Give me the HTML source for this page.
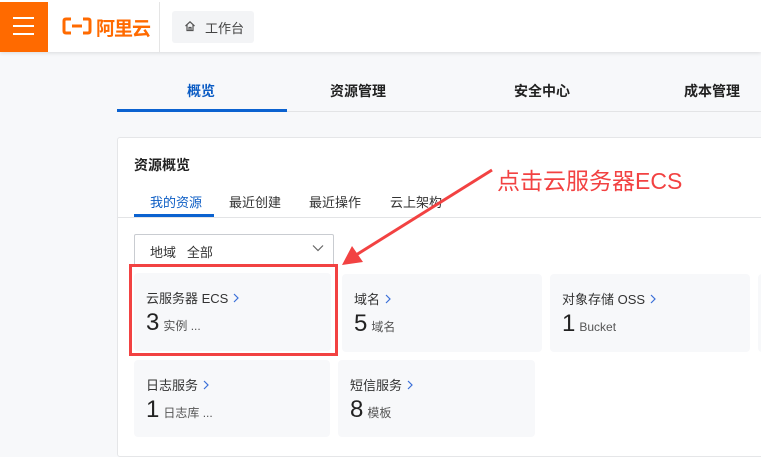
<!DOCTYPE html>
<html><head><meta charset="utf-8"><style>
*{margin:0;padding:0;box-sizing:border-box}
body{width:761px;height:442px;overflow:hidden;background:#f7f8fa;font-family:"Liberation Sans","Noto Sans CJK SC",sans-serif;color:#333;position:relative}
.a{position:absolute}
.hdr{left:0;top:0;width:761px;height:52px;background:#fff;box-shadow:0 1px 4px rgba(0,0,0,.12)}
.tile{position:absolute;background:#f7f8fa;border-radius:4px}
.tile .t{position:absolute;left:12px;top:15px;font-size:13px;color:#333;white-space:nowrap}
.tile .t svg{margin-left:5px;vertical-align:0}
.tile .n{position:absolute;left:12px;top:36px;font-size:24px;color:#222;white-space:nowrap}
.tile .n span{font-size:12px;color:#555;margin-left:4px}
.tab{font-size:14px;font-weight:bold;color:#222;top:81px}
.st{font-size:13px;color:#333;top:192px}
</style></head><body>
<div class="a hdr"></div>
<div class="a" style="left:0;top:2px;width:48px;height:50px;background:#ff6a00"></div>
<div class="a" style="left:13px;top:17px;width:21px;height:2px;background:#fff"></div>
<div class="a" style="left:13px;top:25px;width:21px;height:2px;background:#fff"></div>
<div class="a" style="left:13px;top:33px;width:21px;height:2px;background:#fff"></div>
<svg class="a" style="left:62px;top:17px" width="30" height="18" viewBox="0 0 30 18"><path d="M9 2H4Q2 2 2 4V14Q2 16 4 16H9M21 2H26Q28 2 28 4V14Q28 16 26 16H21M10 9H20" stroke="#ff6a00" stroke-width="3" fill="none"/></svg>
<div class="a" style="left:96px;top:14px;font-size:19px;font-weight:bold;color:#ff6a00;letter-spacing:-1px">阿里云</div>
<div class="a" style="left:159px;top:2px;width:1px;height:50px;background:#e5e5e5"></div>
<div class="a" style="left:172px;top:11px;width:82px;height:32px;background:#f3f4f6;border-radius:3px"></div>
<svg class="a" style="left:184px;top:20px" width="12" height="12" viewBox="0 0 12 12"><path d="M1.5 6L6 1.8 10.5 6M3 5V10.5H9V5M5 10.5V7.5H7V10.5" stroke="#555" stroke-width="1.2" fill="none"/></svg>
<div class="a" style="left:205px;top:18px;font-size:13px;color:#444">工作台</div>

<div class="a" style="left:117px;top:111px;width:644px;height:1px;background:#e3e4e6"></div>
<div class="a" style="left:117px;top:109px;width:170px;height:3px;background:#0b62d0"></div>
<div class="a tab" style="left:187px;color:#0b5cc4">概览</div>
<div class="a tab" style="left:330px">资源管理</div>
<div class="a tab" style="left:514px">安全中心</div>
<div class="a tab" style="left:684px">成本管理</div>

<div class="a" style="left:117px;top:137px;width:650px;height:320px;background:#fff;border:1px solid #e5e6e8;border-radius:3px"></div>
<div class="a" style="left:134px;top:155px;font-size:14px;font-weight:bold;color:#222">资源概览</div>
<div class="a" style="left:118px;top:217px;width:643px;height:1px;background:#e3e4e6"></div>
<div class="a" style="left:134px;top:214px;width:80px;height:3px;background:#0b62d0"></div>
<div class="a st" style="left:150px;color:#0b5cc4">我的资源</div>
<div class="a st" style="left:229px">最近创建</div>
<div class="a st" style="left:309px">最近操作</div>
<div class="a st" style="left:390px">云上架构</div>

<div class="a" style="left:134px;top:234px;width:200px;height:33px;border:1px solid #c9ccd1;border-radius:2px;background:#fff"></div>
<div class="a" style="left:150px;top:242px;font-size:13px;color:#333">地域 &nbsp;&nbsp;全部</div>
<svg class="a" style="left:312px;top:244px" width="12" height="8" viewBox="0 0 12 8"><path d="M1 1.5L6 6.5 11 1.5" stroke="#666" stroke-width="1.2" fill="none"/></svg>

<div class="tile" style="left:134px;top:273px;width:197px;height:78px"><div class="t">云服务器 ECS<svg width="6" height="10" viewBox="0 0 6 10"><path d="M1 1L5 5 1 9" stroke="#3a6fd8" stroke-width="1.2" fill="none"/></svg></div><div class="n">3<span>实例 ...</span></div></div>
<div class="tile" style="left:342px;top:274px;width:200px;height:78px"><div class="t">域名<svg width="6" height="10" viewBox="0 0 6 10"><path d="M1 1L5 5 1 9" stroke="#3a6fd8" stroke-width="1.2" fill="none"/></svg></div><div class="n">5<span>域名</span></div></div>
<div class="tile" style="left:550px;top:274px;width:200px;height:78px"><div class="t">对象存储 OSS<svg width="6" height="10" viewBox="0 0 6 10"><path d="M1 1L5 5 1 9" stroke="#3a6fd8" stroke-width="1.2" fill="none"/></svg></div><div class="n">1<span>Bucket</span></div></div>
<div class="tile" style="left:758px;top:274px;width:20px;height:78px"></div>
<div class="tile" style="left:134px;top:360px;width:196px;height:77px"><div class="t">日志服务<svg width="6" height="10" viewBox="0 0 6 10"><path d="M1 1L5 5 1 9" stroke="#3a6fd8" stroke-width="1.2" fill="none"/></svg></div><div class="n">1<span>日志库 ...</span></div></div>
<div class="tile" style="left:338px;top:360px;width:197px;height:77px"><div class="t">短信服务<svg width="6" height="10" viewBox="0 0 6 10"><path d="M1 1L5 5 1 9" stroke="#3a6fd8" stroke-width="1.2" fill="none"/></svg></div><div class="n">8<span>模板</span></div></div>

<div class="a" style="left:129px;top:264px;width:209px;height:92px;border:3px solid #f24242"></div>
<svg class="a" style="left:0;top:0" width="761" height="442"><path d="M492 170L356 255" stroke="#f24242" stroke-width="3" fill="none"/><path d="M342 265L352 246 363 262Z" fill="#f24242"/></svg>
<div class="a" style="left:497px;top:162px;font-size:23px;color:#f24242;white-space:nowrap">点击云服务器ECS</div>
</body></html>
